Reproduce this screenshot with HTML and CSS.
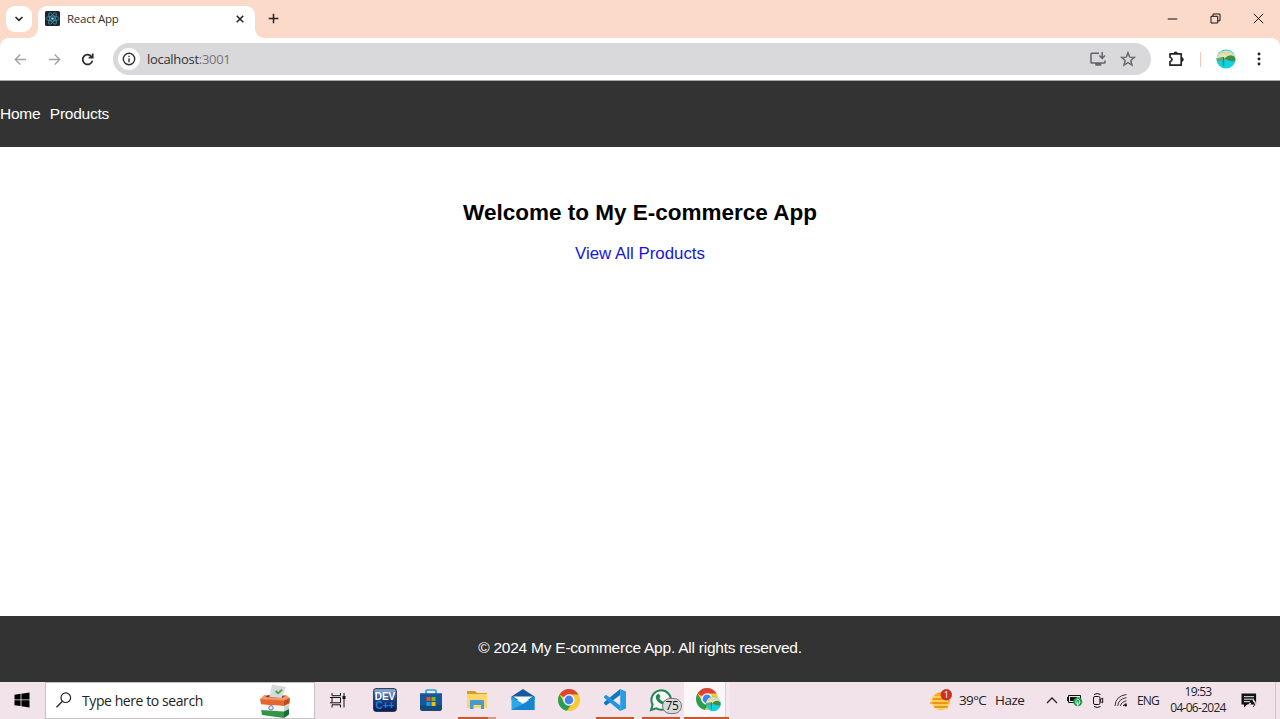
FILE: index.html
```html
<!DOCTYPE html>
<html lang="en">
<head>
<meta charset="utf-8">
<title>React App</title>
<link rel="stylesheet" href="styles.css">
</head>
<body>
<div class="screen">
  <header class="tabstrip">
    <button class="tab-search" aria-label="Search tabs"><svg width="10" height="8" viewBox="0 0 10 8"><path d="M1.500 2 5 5.400 8.500 2" fill="none" stroke="#222" stroke-width="1.600"/></svg></button>
    <div class="tab">
      <svg class="favicon" width="15" height="15" viewBox="0 0 15 15"><rect width="15" height="15" rx="1.500" fill="#20232a"/><g fill="none" stroke="#4099b3" stroke-width=".8"><ellipse cx="7.500" cy="7.500" rx="6.400" ry="2.500"/><ellipse cx="7.500" cy="7.500" rx="6.400" ry="2.500" transform="rotate(60 7.500 7.500)"/><ellipse cx="7.500" cy="7.500" rx="6.400" ry="2.500" transform="rotate(120 7.500 7.500)"/></g><circle cx="7.500" cy="7.500" r="1.300" fill="#61dafb"/></svg>
      <span class="tab-title">React App</span>
      <svg class="tab-close" width="8" height="8" viewBox="0 0 8 8"><path d="M.7.7 7.300 7.300M7.300.7.7 7.300" stroke="#222" stroke-width="1.500"/></svg>
    </div>
    <svg class="new-tab" width="11" height="11" viewBox="0 0 11 11"><path d="M5.500.7v9.600M.7 5.500h9.600" stroke="#222" stroke-width="1.500"/></svg>
    <div class="window-controls">
      <svg width="11" height="11" viewBox="0 0 11 11"><path d="M.7 6h9.600" stroke="#111"/></svg>
      <svg width="11" height="11" viewBox="0 0 11 11"><path d="M1 3.300h6.700V10H1zM3 3V1h7v6.800H8" fill="none" stroke="#111"/></svg>
      <svg width="11" height="11" viewBox="0 0 11 11"><path d="m.8.8 9.400 9.400M10.200.8.8 10.200" stroke="#111"/></svg>
    </div>
  </header>
  <div class="toolbar">
    <div class="nav-buttons">
      <svg width="13" height="13" viewBox="0 0 13 13"><path d="M12 6.500H1.500M6.300 1.500l-5 5 5 5" fill="none" stroke="#a2a2a2" stroke-width="1.400"/></svg>
      <svg width="13" height="13" viewBox="0 0 13 13"><path d="M1 6.500h10.500M6.700 1.500l5 5-5 5" fill="none" stroke="#a2a2a2" stroke-width="1.400"/></svg>
      <svg width="13" height="13" viewBox="0 0 13 13"><path d="M10.600 3.700A4.900 4.900 0 1 0 11.400 7.600M7.700 4.600h4V.6" fill="none" stroke="#292929" stroke-width="1.700"/></svg>
    </div>
    <div class="address">
      <span class="site-info"><svg width="14" height="14" viewBox="0 0 14 14"><circle cx="7" cy="7" r="5.700" fill="none" stroke="#333" stroke-width="1.400"/><path d="M7 6.200v4M7 3.700v1.400" stroke="#333" stroke-width="1.400"/></svg></span>
      <span class="url">localhost<span class="port">:3001</span></span>
      <svg class="install" width="17" height="16" viewBox="0 0 17 16"><path d="M9 2.200H1.800q-.8 0-.8.8v8.200q0 .8.8.8h12.400q.8 0 .8-.8V9.500M12.200 1v6M9.400 4.500l2.800 2.900L15 4.500" fill="none" stroke="#626467" stroke-width="1.500"/><path d="M5.300 12h6v2.700h-6z" fill="#626467"/></svg>
      <svg class="star" width="16" height="16" viewBox="0 0 16 16"><path d="m8 1.700 1.700 4.400 4.700.3-3.600 3 1.200 4.700L8 11.500l-4 2.600 1.200-4.700-3.600-3 4.700-.3z" fill="none" stroke="#626467" stroke-width="1.400"/></svg>
    </div>
    <svg class="puzzle" width="17" height="17" viewBox="0 0 17 17"><path d="M2 2.800h11.200v11.400H2v-3.500q2-.6 2-2.200T2 6.300z" fill="none" stroke="#222" stroke-width="1.700" stroke-linejoin="round"/><path d="M5.700 2.500a2 1.900 0 0 1 4 0zM13.700 6.300a2 2.200 0 0 1 0 4.400z" fill="#222"/></svg>
    <span class="separator"></span>
    <svg class="avatar" width="20" height="20" viewBox="0 0 20 20"><use href="#profile"/></svg>
    <svg class="menu" width="4" height="16" viewBox="0 0 4 16"><g fill="#222"><circle cx="2" cy="3" r="1.450"/><circle cx="2" cy="8" r="1.450"/><circle cx="2" cy="13" r="1.450"/></g></svg>
  </div>

  <nav class="site-nav"><a href="#">Home</a><a href="#">Products</a></nav>
  <main class="page">
    <h1>Welcome to My E-commerce App</h1>
    <a class="view-all" href="#">View All Products</a>
  </main>
  <footer class="site-footer">© 2024 My E-commerce App. All rights reserved.</footer>

  <div class="taskbar">
    <div class="start"><svg width="16" height="16" viewBox="0 0 16 16"><path d="M.5 2.700 6.600 1.800V7.500H.5zM7.400 1.700 15.500.5v7H7.400zM.5 8.300h6.100v5.800L.5 13.300zM7.400 8.300h8.100v7.200l-8.100-1.200z" fill="#000"/></svg></div>
    <div class="search">
      <svg width="17" height="17" viewBox="0 0 17 17"><circle cx="10.800" cy="5.700" r="4.800" fill="none" stroke="#222" stroke-width="1.200"/><path d="M7.400 9.200 1.500 15.200" stroke="#222" stroke-width="1.300"/></svg>
      <span class="search-text">Type here to search</span>
      <svg class="ballot" width="30" height="34" viewBox="0 0 30 34"><path d="m0 15 4-4h22l4 3-5 4z" fill="#f09a6b"/><path d="m5 13 17 1 3-2-17-.7z" fill="#8c3d22"/><path d="m12 .5 14 2.500-4.500 11-12-1z" fill="#d5dade"/><path d="m15.500 7 2.500 2.200 4-3.400" fill="none" stroke="#49a745" stroke-width="1.900"/><path d="m0 15 24 1.500V22L1 20.500z" fill="#e5662d"/><path d="m24 16.500 6-2.500-.6 5.500L24 22z" fill="#c04b20"/><path d="m1 20.500 23 1.500v5.500L1.200 26z" fill="#f4f5f3"/><path d="m24 22 5.400-2.500-.4 5.500-5 2.500z" fill="#cfd4d2"/><path d="m1.200 26 22.800 1.500V34L2 31z" fill="#349648"/><path d="m24 27.500 5-2.500v5.500L24 34z" fill="#17702f"/><circle cx="11" cy="23.800" r="2.200" fill="#e6e8fa" stroke="#6572b0"/></svg>
    </div>
    <div class="task-view"><svg width="17" height="17" viewBox="0 0 17 17"><path d="M2 1v2.700h8.500V1M2 15.500v-2.700h8.500v2.700M2 5.500h8.500v5.300H2zM14 1v14.500M0 5.500h2M0 10.800h2" fill="none" stroke="#111"/><path d="M12.500 4h3v3h-3z" fill="#111"/></svg></div>
    <div class="app"><svg width="24" height="24" viewBox="0 0 24 24"><defs><linearGradient id="dev" x2="0" y2="1"><stop stop-color="#9abbe6"/><stop offset=".45" stop-color="#1d4388"/><stop offset="1" stop-color="#091c50"/></linearGradient></defs><rect x=".7" y=".7" width="22.600" height="22.600" rx="2" fill="url(#dev)" stroke="#12213f"/><text class="dev-title" x="12" y="11.500" text-anchor="middle">DEV</text><text class="dev-lang" x="12" y="21.300" text-anchor="middle">C++</text></svg></div>
    <div class="app"><svg width="24" height="24" viewBox="0 0 24 24"><path d="M7 6V3q0-1 1-1h8q1 0 1 1v3" fill="none" stroke="#25a8e0" stroke-width="1.700"/><path d="M1 5.300h22V20q0 3-3 3H4q-3 0-3-3z" fill="#16599a"/><path d="M1 17h22v3q0 3-3 3H4q-3 0-3-3z" fill="#154777"/><path d="M7.500 9h4v4h-4z" fill="#f25022"/><path d="M12.500 9h4v4h-4z" fill="#7fba00"/><path d="M7.500 14h4v4h-4z" fill="#00a4ef"/><path d="M12.500 14h4v4h-4z" fill="#ffb900"/></svg></div>
    <div class="app running grouped"><svg width="22" height="22" viewBox="0 0 22 22"><path d="M1 2h8l2 2h10v15H1z" fill="#d79b27"/><path d="M1 5h20v14H1z" fill="#fbd66b"/><path d="M4 20v-8q0-1 1-1h12q1 0 1 1v8h-3v-4H7.500v4z" fill="#459bd2"/></svg></div>
    <div class="app"><svg width="24" height="24" viewBox="0 0 24 24"><path d="M.5 8.500 12 1l11.500 7.500V12H.5z" fill="#155a9f"/><path d="M.5 8.500 12 16l11.500-7.500V22H.5z" fill="#28a9e9"/><path d="M.5 22 15 14.500 23.500 9v13z" fill="#1685d0"/><path d="M2 8.500h20L12 15z" fill="#f6fbff"/></svg></div>
    <div class="app"><svg width="24" height="24" viewBox="0 0 24 24"><g id="chrome"><circle cx="12" cy="12" r="11" fill="#fac832"/><path d="M12 12 2.500 6.500A11 11 0 0 1 21.500 6.500H12z" fill="#dc4437"/><path d="M2.500 6.500 7.300 14.800 12 17.500 9.600 22.700A11 11 0 0 1 2.500 6.500z" fill="#279d58"/><path d="m9.600 22.700 4.800-6-4-2-3.100.1z" fill="#279d58"/><circle cx="12" cy="12" r="5.700" fill="#fff"/><circle cx="12" cy="12" r="4.400" fill="#4285ea"/></g></svg></div>
    <div class="app running"><svg width="24" height="24" viewBox="0 0 24 24"><path d="M17.200 1v6L3 17.500l-2-1.700v-1.500z" fill="#1476b8"/><path d="M1 8.500 3 6.700l14.200 10.800V23L1 9.800z" fill="#2396db"/><path d="m17.200 1 5.800 2.500v17L17.200 23z" fill="#279ee1"/></svg></div>
    <div class="app running"><svg class="whatsapp" width="25" height="24" viewBox="0 0 25 24"><path d="m2 22 1.600-5.400a9.700 9.700 0 1 1 3.700 3.800z" fill="#f6f9f6" stroke="#238456" stroke-width="2"/><path d="M8.200 6.600q1.500-1.600 2.200 0l1 2-1.100 1.600q1.300 2.500 3.900 3.600l1.600-1.500 2.300 1.100q.8.600.2 1.700-1.800 3-6.400.6-4.800-2.800-5.200-6.500-.1-1.600 1.500-2.600z" fill="#238456"/></svg><span class="badge">75</span></div>
    <div class="app running active"><svg width="28" height="26" viewBox="0 0 28 26"><use href="#chrome"/><g transform="translate(10.500 9) scale(.78)"><g id="profile"><circle cx="10" cy="10" r="9.500" fill="#10d1df"/><path d="M.7 9A9.500 9.500 0 0 1 19.300 9l-6 1.500z" fill="#dfe4b2"/><path d="M.5 9.500 6 8l4 2-9 3z" fill="#65a96c"/><path d="M9 9q5-5 10-1l.3 4q-5 1-10.300-2z" fill="#438c45"/><path d="m3 5 4-2 3 2 4-2" fill="none" stroke="#efbe8b"/><path d="M7.500 8v9" stroke="#267f63" stroke-width="1.300"/></g></g></svg></div>
    <div class="weather"><svg width="24" height="24" viewBox="0 0 24 24"><circle cx="11" cy="13" r="9" fill="#f5ac22"/><path d="M2 9h13M0 13h18M2 17h18M6 20.500h12" stroke="#ffdc66" stroke-width="1.500"/><path d="M0 15h17M4 19h14M3 11h16" stroke="#de7d19"/><circle cx="16.300" cy="6.800" r="5.700" fill="#cb3027"/><text class="alert-count" x="16.300" y="9.900" text-anchor="middle">1</text></svg><span class="temp">39°C</span><span class="haze">Haze</span></div>
    <div class="tray">
      <svg width="12" height="8" viewBox="0 0 12 8"><path d="m1 7 5-5 5 5" fill="none" stroke="#222" stroke-width="1.300"/></svg>
      <svg class="battery" width="16" height="14" viewBox="0 0 16 14"><path d="M1.500 2.500h12v7h-12z" fill="none" stroke="#111"/><path d="M3 4h7v4H3zM0 4h1v4H0z" fill="#111"/><circle cx="10.800" cy="8.800" r="4.500" fill="#1b9b49"/><path d="M10.800 6c3 1.500 2.200 5.300 0 5.500-2.200-.2-3-4 0-5.500zM10.800 8.500V13" fill="none" stroke="#e9fff0"/></svg>
      <svg class="camera" width="12" height="17" viewBox="0 0 12 17"><path d="M2 2.500q3-2 6.500 0M2 14.500q3 2 6.500 0" fill="none" stroke="#111"/><rect x="1.500" y="4.500" width="6.500" height="8" rx="1.500" fill="none" stroke="#111"/><path d="m8.200 7.500 2.500-1.300v4.600L8.200 9.500z" fill="none" stroke="#111"/></svg>
      <svg class="wifi" width="14" height="14" viewBox="0 0 14 14"><g fill="none" stroke="#333"><path d="M1 13Q1.500 3 12.500 1.500M3.800 13Q4.200 6 12.500 4.600M6.500 13Q7 9 12.500 7.700M9.200 13q.5-2 3.300-2.500"/></g><circle cx="11.700" cy="12.300" r="1.300" fill="#111"/></svg>
      <span class="lang">ENG</span>
      <span class="clock"><span class="time">19:53</span><span class="date">04-06-2024</span></span>
      <svg class="notify" width="16" height="16" viewBox="0 0 16 16"><path d="M.5 1.500h14.600v11H6l-3 3v-3H.5z" fill="#111"/><path d="M3 4.700h10M3 7.200h10M3 9.700h6" stroke="#eee"/><path d="M12 8.200q3 2.500 1.800 4.600M10 11.500a2 2 0 1 0 2 2" fill="none" stroke="#f1e2eb" stroke-width="1.500"/><path d="M12.500 10.500q2.300 2.500-.3 4.300" fill="none" stroke="#111"/></svg>
    </div>
    <span class="show-desktop"></span>
  </div>
</div>
</body>
</html>
```
FILE: styles.css
```css
* { box-sizing: border-box; }
body { margin: 0; overflow: hidden; background: #fff; }
svg { display: block; flex: none; overflow: visible; }
.screen { width: 1280px; height: 719px; display: flex; flex-direction: column; font-family: "Liberation Sans", Arial, sans-serif; }
.tabstrip { height: 38px; flex: none; display: flex; align-items: flex-start; background: #fcdac9; padding-left: 6px; }
.tab-search { width: 26px; height: 26px; margin-top: 6px; padding: 0; border: 0; border-radius: 9px; background: #fff; display: flex; align-items: center; justify-content: center; }
.tab { position: relative; width: 217px; height: 32px; margin: 6px 0 0 6px; background: #fff; border-radius: 9px 9px 0 0; display: flex; align-items: center; padding: 0 10px 7px 7px; }
.tab::before, .tab::after { content: ""; position: absolute; bottom: 0; width: 9px; height: 9px; }
.tab::before { left: -9px; background: radial-gradient(circle at 0 0, transparent 8.500px, #fff 9px); }
.tab::after { right: -9px; background: radial-gradient(circle at 100% 0, transparent 8.500px, #fff 9px); }
.tab-title { margin-left: 7px; font: 11.500px "Open Sans", sans-serif; letter-spacing: -.25px; color: #333; white-space: nowrap; }
.tab-close { margin-left: auto; margin-right: 1px; }
.new-tab { margin: 13px 0 0 13px; }
.window-controls { margin: 13px 16px 0 auto; display: flex; gap: 32px; }
.toolbar { position: relative; height: 43px; flex: none; display: flex; align-items: center; padding: 0 19px 0 14px; background: #fff; border-bottom: 1px solid #aaa; }
.toolbar::before, .toolbar::after { content: ""; position: absolute; top: 0; width: 8px; height: 8px; }
.toolbar::before { left: 0; background: radial-gradient(circle at 100% 100%, transparent 7.500px, #fcdac9 8px); }
.toolbar::after { right: 0; background: radial-gradient(circle at 0 100%, transparent 7.500px, #fcdac9 8px); }
.nav-buttons { display: flex; gap: 20.500px; width: 98.500px; }
.address { width: 1038.500px; height: 32px; border-radius: 16px; background: #d9d9db; display: flex; align-items: center; padding: 0 15px 0 5px; }
.site-info { width: 22px; height: 22px; border-radius: 50%; background: #fff; display: flex; align-items: center; justify-content: center; }
.url { margin-left: 7.500px; font: 13px "Open Sans", sans-serif; color: #333; letter-spacing: -.3px; }
.port { color: #747474; }
.install { margin-left: auto; }
.star { margin-left: 13px; }
.puzzle { margin-left: 17px; }
.separator { width: 1px; height: 15px; margin-left: 15px; background: #f8c8b5; }
.avatar { margin-left: 15px; }
.menu { margin-left: auto; }
.site-nav { height: 66px; flex: none; background: #333; display: flex; align-items: center; gap: 9.400px; font-size: 15.500px; letter-spacing: -.24px; padding-bottom: 1px; }
.site-nav a { color: #fff; text-decoration: none; }
.page { flex: 1; text-align: center; padding-top: 53px; }
.page h1 { font-size: 22.500px; line-height: 26px; margin: 0 0 17px; }
.view-all { display: block; color: #1515df; text-decoration: none; font-size: 16.875px; line-height: 21px; }
.site-footer { height: 66px; flex: none; background: #333; color: #fff; display: flex; align-items: center; justify-content: center; font-size: 15.500px; letter-spacing: -.235px; padding-bottom: 2px; }
.taskbar { height: 37px; flex: none; display: flex; background: #f2e3eb; font-family: "Open Sans", sans-serif; color: #222; }
.start { width: 45px; display: flex; align-items: center; justify-content: center; padding: 0 1px 1px 0; }
.search { width: 270px; background: #fff; border: 1px solid #c6c1c4; display: flex; align-items: center; padding-left: 9px; }
.search-text { margin-left: 10px; font-size: 14px; letter-spacing: -.42px; white-space: nowrap; }
.ballot { margin-left: auto; margin-right: 24px; }
.task-view { width: 47px; display: flex; align-items: center; justify-content: center; padding: 0 1px 1px 0; }
.app { position: relative; width: 46px; display: flex; align-items: center; justify-content: center; padding-bottom: 1px; }
.running::after { content: ""; position: absolute; height: 2px; left: 4px; right: 4px; bottom: 0; background: #c7592d; }
.grouped::after { background: linear-gradient(to right, #c7592d 80%, #d79b83 80%); }
.active { background: linear-gradient(to right, #fbf6f9 41px, #ddcfd7 41px 42px, #f5e9f0 42px); padding-left: 3px; }
.active::after { left: 0; right: 1px; }
.dev-title { font: bold 10px "Liberation Sans", sans-serif; fill: #fff; }
.dev-lang { font: bold 10px "Liberation Sans", sans-serif; fill: #1683dc; }
.badge { position: absolute; left: 24px; top: 16px; width: 20px; height: 16px; border: 1px solid #777; border-radius: 8px; background: #d9dadb; color: #111; font-size: 12px; line-height: 14px; text-align: center; letter-spacing: -.3px; }
.weather { margin-left: auto; display: flex; align-items: center; width: 116px; font-size: 13.500px; padding-bottom: 1px; }
.alert-count { font: 9px "Open Sans", sans-serif; fill: #fff; }
.temp { margin-left: 5px; width: 36px; letter-spacing: -.65px; }
.haze { letter-spacing: -.5px; }
.tray { display: flex; align-items: center; width: 212px; padding-bottom: 1px; }
.battery { margin-left: 9px; }
.camera { margin-left: 9px; }
.wifi { margin-left: 10px; }
.lang { margin-left: 9px; width: 24px; font-size: 12px; letter-spacing: -.85px; }
.clock { width: 60px; margin-left: 7px; display: flex; flex-direction: column; align-items: center; font-size: 12px; line-height: 16.500px; letter-spacing: -.72px; white-space: nowrap; }
.notify { margin-left: 13px; }
.show-desktop { width: 5px; border-left: 1px solid #cfc4cb; margin-left: 17px; }
```
